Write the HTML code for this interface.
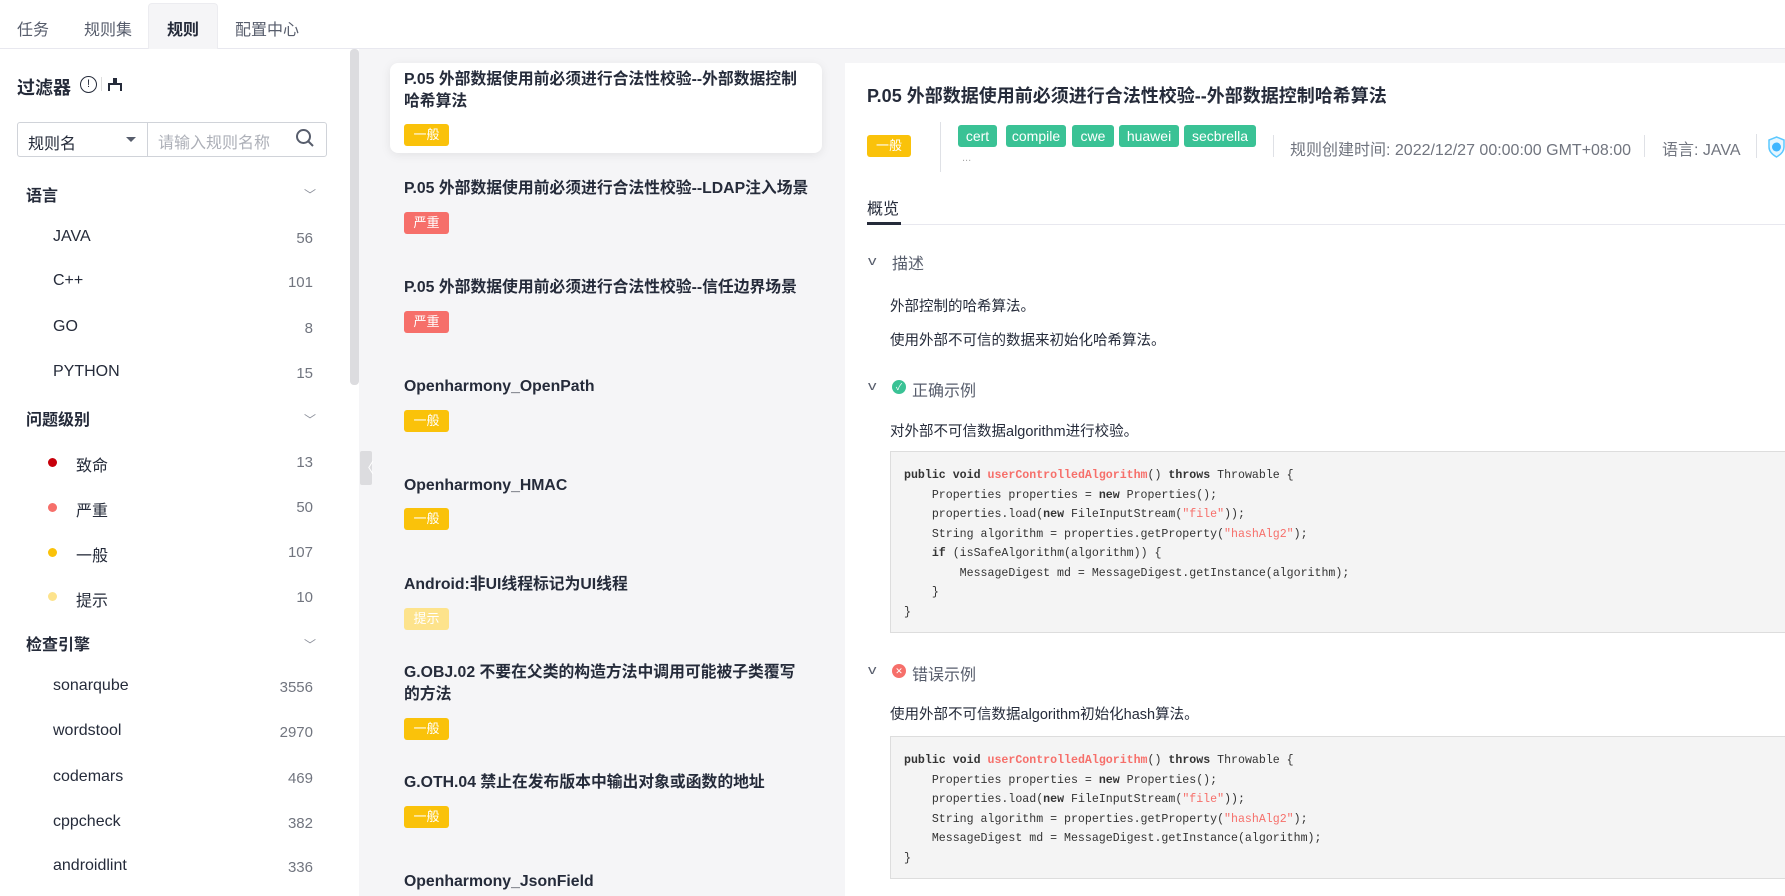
<!DOCTYPE html>
<html><head><meta charset="utf-8">
<style>
*{margin:0;padding:0;box-sizing:border-box}
body{width:1785px;height:896px;overflow:hidden;background:#fff;font-family:"Liberation Sans","Noto Sans CJK SC",sans-serif;color:#252b3a;position:relative}
.a{position:absolute;white-space:nowrap}
.tab{top:16px;font-size:16px;color:#575d6c}
.cnt{right:1472px;font-size:15px;color:#71757f;text-align:right;margin-top:2px}
.li{left:53px;font-size:16px;color:#252b3a}
.hd{left:26px;font-size:16px;font-weight:bold}
.chev{left:304px;font-size:12px;color:#8a8e99;margin-top:6px}
.dot{left:48px;width:9px;height:9px;border-radius:50%}
.mt{left:404px;font-size:15.8px;font-weight:bold;color:#252b3a;line-height:22px}
.bd{left:404px;width:45px;height:22px;border-radius:3px;color:#fff;font-size:13px;text-align:center;line-height:22px}
.y{background:#fac20a}.r{background:#f66f6a}.p{background:#fde38c}
.tag{top:125px;height:22px;background:#3ac295;color:#fff;font-size:14px;line-height:22px;text-align:center;border-radius:3px}
.code{left:890px;width:900px;background:#f4f4f4;border:1px solid #ddd;font-family:"Liberation Mono",monospace;font-size:11.6px;line-height:19.5px;color:#333;padding:14px 0 0 13px;white-space:pre}
.code b{color:#333}.code .f{color:#f66f6a;font-weight:bold}.code .s{color:#f66f6a}
.sec{left:912px;font-size:16px;color:#575d6c}
.txt{left:890px;font-size:14.5px;color:#252b3a}
</style></head><body>
<div class="a" style="left:0;top:48px;width:1785px;height:1px;background:#e8e8ef"></div>
<div class="a" style="left:148px;top:3px;width:70px;height:46px;background:#f5f5f7;border:1px solid #ececf0;border-bottom:none;border-radius:4px 4px 0 0"></div>
<div class="a tab" style="left:17px">任务</div>
<div class="a tab" style="left:84px">规则集</div>
<div class="a tab" style="left:167px;color:#252b3a;font-weight:bold">规则</div>
<div class="a tab" style="left:235px">配置中心</div>

<div class="a" style="left:17px;top:74px;font-size:18px;font-weight:bold">过滤器</div>
<div class="a" style="left:80px;top:76px;width:17px;height:17px;border:1.3px solid #252b3a;border-radius:50%;font-size:11px;text-align:center;line-height:15px">!</div>
<div class="a" style="left:101px;top:77px;width:1px;height:14px;background:#ddd"></div>
<div class="a" style="left:108px;top:78px;width:14px;height:13px"><div style="position:absolute;left:5px;top:0;width:4px;height:6px;background:#252b3a"></div><div style="position:absolute;left:0;top:5px;width:14px;height:8px;border:2px solid #252b3a;border-bottom:none"></div></div>
<div class="a" style="left:17px;top:122px;width:310px;height:35px;border:1px solid #d0d3d9;border-radius:3px"></div>
<div class="a" style="left:147px;top:122px;width:1px;height:35px;background:#d0d3d9"></div>
<div class="a" style="left:28px;top:130px;font-size:16px">规则名</div>
<div class="a" style="left:126px;top:137px;width:0;height:0;border-left:5px solid transparent;border-right:5px solid transparent;border-top:5px solid #575d6c"></div>
<div class="a" style="left:158px;top:129px;font-size:16px;color:#adb0b8">请输入规则名称</div>
<svg class="a" style="left:295px;top:128px" width="20" height="20" viewBox="0 0 20 20"><circle cx="8.5" cy="8.5" r="6.5" fill="none" stroke="#575d6c" stroke-width="2"/><line x1="13.5" y1="13.5" x2="18" y2="18" stroke="#575d6c" stroke-width="2"/></svg>

<div class="a hd" style="top:182px">语言</div><div class="a chev" style="top:180px">﹀</div>
<div class="a li" style="top:228px">JAVA</div><div class="a cnt" style="top:228px">56</div>
<div class="a li" style="top:272px">C++</div><div class="a cnt" style="top:272px">101</div>
<div class="a li" style="top:318px">GO</div><div class="a cnt" style="top:318px">8</div>
<div class="a li" style="top:363px">PYTHON</div><div class="a cnt" style="top:363px">15</div>
<div class="a hd" style="top:406px">问题级别</div><div class="a chev" style="top:405px">﹀</div>
<div class="a dot" style="top:458px;background:#c7000b"></div><div class="a li" style="left:76px;top:452px">致命</div><div class="a cnt" style="top:452px">13</div>
<div class="a dot" style="top:503px;background:#f66f6a"></div><div class="a li" style="left:76px;top:497px">严重</div><div class="a cnt" style="top:497px">50</div>
<div class="a dot" style="top:548px;background:#fac20a"></div><div class="a li" style="left:76px;top:542px">一般</div><div class="a cnt" style="top:542px">107</div>
<div class="a dot" style="top:592px;background:#fde38c"></div><div class="a li" style="left:76px;top:587px">提示</div><div class="a cnt" style="top:587px">10</div>
<div class="a hd" style="top:631px">检查引擎</div><div class="a chev" style="top:630px">﹀</div>
<div class="a li" style="top:677px">sonarqube</div><div class="a cnt" style="top:677px">3556</div>
<div class="a li" style="top:722px">wordstool</div><div class="a cnt" style="top:722px">2970</div>
<div class="a li" style="top:768px">codemars</div><div class="a cnt" style="top:768px">469</div>
<div class="a li" style="top:813px">cppcheck</div><div class="a cnt" style="top:813px">382</div>
<div class="a li" style="top:857px">androidlint</div><div class="a cnt" style="top:857px">336</div>
<div class="a" style="left:350px;top:49px;width:9px;height:336px;background:#dcdcdf;border-radius:4px"></div>

<div class="a" style="left:359px;top:49px;width:486px;height:847px;background:#f5f5f7"></div>
<div class="a" style="left:360px;top:451px;width:12px;height:34px;background:#dcdcdf;border-radius:2px;color:#fff;font-size:14px;line-height:34px;text-align:center">〈</div>
<div class="a" style="left:390px;top:63px;width:432px;height:90px;background:#fff;border-radius:8px;box-shadow:0 2px 10px rgba(0,0,0,.08)"></div>
<div class="a mt" style="top:69px">P.05 外部数据使用前必须进行合法性校验--外部数据控制<br>哈希算法</div>
<div class="a bd y" style="top:124px">一般</div>
<div class="a mt" style="top:178px">P.05 外部数据使用前必须进行合法性校验--LDAP注入场景</div>
<div class="a bd r" style="top:212px">严重</div>
<div class="a mt" style="top:277px">P.05 外部数据使用前必须进行合法性校验--信任边界场景</div>
<div class="a bd r" style="top:311px">严重</div>
<div class="a mt" style="top:376px">Openharmony_OpenPath</div>
<div class="a bd y" style="top:410px">一般</div>
<div class="a mt" style="top:475px">Openharmony_HMAC</div>
<div class="a bd y" style="top:508px">一般</div>
<div class="a mt" style="top:574px">Android:非UI线程标记为UI线程</div>
<div class="a bd p" style="top:608px">提示</div>
<div class="a mt" style="top:662px">G.OBJ.02 不要在父类的构造方法中调用可能被子类覆写<br>的方法</div>
<div class="a bd y" style="top:718px">一般</div>
<div class="a mt" style="top:772px">G.OTH.04 禁止在发布版本中输出对象或函数的地址</div>
<div class="a bd y" style="top:806px">一般</div>
<div class="a mt" style="top:871px">Openharmony_JsonField</div>

<div class="a" style="left:845px;top:49px;width:940px;height:14px;background:#f5f5f7"></div>
<div class="a" style="left:845px;top:63px;width:940px;height:833px;background:#fff;border-radius:6px 0 0 0"></div>
<div class="a" style="left:867px;top:82px;font-size:18px;font-weight:bold">P.05 外部数据使用前必须进行合法性校验--外部数据控制哈希算法</div>
<div class="a bd y" style="left:867px;top:135px;width:44px">一般</div>
<div class="a" style="left:940px;top:122px;width:1px;height:50px;background:#dfe1e6"></div>
<div class="a tag" style="left:958px;width:39px">cert</div>
<div class="a tag" style="left:1006px;width:60px">compile</div>
<div class="a tag" style="left:1072px;width:42px">cwe</div>
<div class="a tag" style="left:1119px;width:60px">huawei</div>
<div class="a tag" style="left:1184px;width:72px">secbrella</div>
<div class="a" style="left:962px;top:152px;font-size:11px;color:#aaa">...</div>
<div class="a" style="left:1273px;top:135px;width:1px;height:22px;background:#dfe1e6"></div>
<div class="a" style="left:1290px;top:136px;font-size:16px;color:#71757f">规则创建时间: 2022/12/27 00:00:00 GMT+08:00</div>
<div class="a" style="left:1644px;top:135px;width:1px;height:22px;background:#dfe1e6"></div>
<div class="a" style="left:1662px;top:136px;font-size:16px;color:#71757f">语言: JAVA</div>
<div class="a" style="left:1756px;top:134px;width:1px;height:24px;background:#dfe1e6"></div>
<svg class="a" style="left:1768px;top:136px" width="17" height="22" viewBox="0 0 17 22"><path d="M8.5 1 L16 4 V11 C16 16 12 19 8.5 21 C5 19 1 16 1 11 V4 Z" fill="#e6f6ff" stroke="#5cc8ff" stroke-width="1.5"/><circle cx="8.5" cy="11" r="4.5" fill="#3fb6ff"/></svg>

<div class="a" style="left:867px;top:195px;font-size:16px;color:#252b3a">概览</div>
<div class="a" style="left:867px;top:224px;width:918px;height:1px;background:#e8e8ef"></div>
<div class="a" style="left:867px;top:222px;width:34px;height:3px;background:#252b3a"></div>

<div class="a" style="left:869px;top:253px;font-size:13px;color:#575d6c;transform:scaleX(1.3)">v</div>
<div class="a sec" style="left:892px;top:250px">描述</div>
<div class="a txt" style="top:295px">外部控制的哈希算法。</div>
<div class="a txt" style="top:329px">使用外部不可信的数据来初始化哈希算法。</div>

<div class="a" style="left:869px;top:378px;font-size:13px;color:#575d6c;transform:scaleX(1.3)">v</div>
<div class="a" style="left:892px;top:380px;width:14px;height:14px;border-radius:50%;background:#3ac295;color:#fff;font-size:9px;text-align:center;line-height:14px">✓</div>
<div class="a sec" style="top:377px">正确示例</div>
<div class="a txt" style="top:420px">对外部不可信数据algorithm进行校验。</div>
<div class="a code" style="top:451px;height:182px"><b>public void</b> <span class="f">userControlledAlgorithm</span>() <b>throws</b> Throwable {
    Properties properties = <b>new</b> Properties();
    properties.load(<b>new</b> FileInputStream(<span class="s">"file"</span>));
    String algorithm = properties.getProperty(<span class="s">"hashAlg2"</span>);
    <b>if</b> (isSafeAlgorithm(algorithm)) {
        MessageDigest md = MessageDigest.getInstance(algorithm);
    }
}</div>

<div class="a" style="left:869px;top:662px;font-size:13px;color:#575d6c;transform:scaleX(1.3)">v</div>
<div class="a" style="left:892px;top:664px;width:14px;height:14px;border-radius:50%;background:#f66f6a;color:#fff;font-size:9px;text-align:center;line-height:14px">✕</div>
<div class="a sec" style="top:661px">错误示例</div>
<div class="a txt" style="top:703px">使用外部不可信数据algorithm初始化hash算法。</div>
<div class="a code" style="top:736px;height:143px"><b>public void</b> <span class="f">userControlledAlgorithm</span>() <b>throws</b> Throwable {
    Properties properties = <b>new</b> Properties();
    properties.load(<b>new</b> FileInputStream(<span class="s">"file"</span>));
    String algorithm = properties.getProperty(<span class="s">"hashAlg2"</span>);
    MessageDigest md = MessageDigest.getInstance(algorithm);
}</div>
</body></html>
